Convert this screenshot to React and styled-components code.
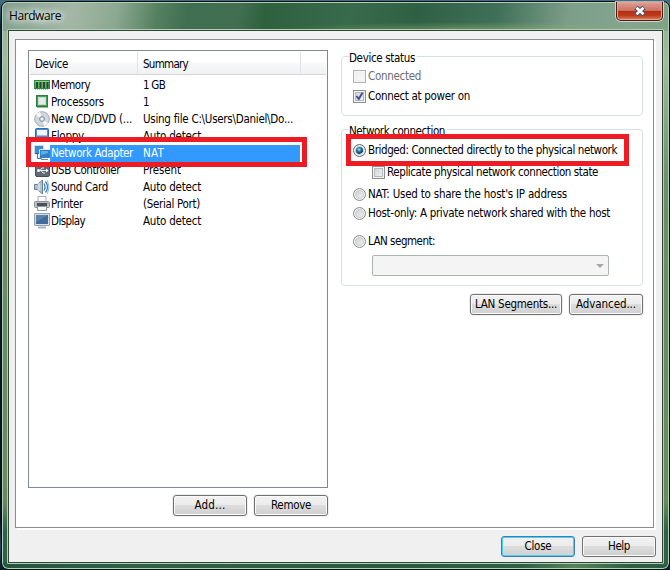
import React, { useLayoutEffect, useRef, useState } from 'react';
import styled, { createGlobalStyle, css } from 'styled-components';

const devices = [
    { icon: 'memory', name: 'Memory', nameWidth: 39, summary: '1 GB', summaryWidth: 22 },
    { icon: 'cpu', name: 'Processors', nameWidth: 53, summary: '1', summaryWidth: 7 },
    { icon: 'disc', name: 'New CD/DVD (...', nameWidth: 81, summary: 'Using file C:\\Users\\Daniel\\Do...', summaryWidth: 150 },
    { icon: 'floppy', name: 'Floppy', nameWidth: 33, summary: 'Auto detect', summaryWidth: 58 },
    { icon: 'network', name: 'Network Adapter', nameWidth: 82, summary: 'NAT', summaryWidth: 21, selected: true },
    { icon: 'usb', name: 'USB Controller', nameWidth: 69, summary: 'Present', summaryWidth: 38 },
    { icon: 'sound', name: 'Sound Card', nameWidth: 57, summary: 'Auto detect', summaryWidth: 58 },
    { icon: 'printer', name: 'Printer', nameWidth: 32, summary: '(Serial Port)', summaryWidth: 57 },
    { icon: 'display', name: 'Display', nameWidth: 34, summary: 'Auto detect', summaryWidth: 58 },
];

// text that is tracked to fill the given width
const Label = ({ width, children }) => {
    const ref = useRef(null)
    const [spacing, setSpacing] = useState(0)

    useLayoutEffect(() => {
        const natural = ref.current.getBoundingClientRect().width
        setSpacing((width - natural) / children.length)
    }, [])

    return <Text ref={ref} style={{ letterSpacing: `${spacing}px` }}>{children}</Text>
}

const icons = {
    memory: (
        <>
            <rect x="0.5" y="3.5" width="15" height="8" fill="#5cb45f" stroke="#2c8a3c" />
            <path d="M2 5h2v6H2zM5.5 5h2v6h-2zM9 5h2v6H9zM12.5 5h2v6h-2z" fill="#2b4a33" />
            <path d="M1 12.5h14" stroke="#b9b27a" strokeDasharray="1 1" />
            <path d="M1 4.5h14" stroke="#8fd08f" />
        </>
    ),
    cpu: (
        <>
            <rect x="2.5" y="1.5" width="11" height="11" fill="#3fa458" stroke="#2a7f40" />
            <rect x="4.5" y="3.5" width="7" height="7" fill="#e7eaea" stroke="#c9d9cd" />
            <path d="M3 13.5h11" stroke="#9bb8a2" />
        </>
    ),
    disc: (
        <>
            <circle cx="8" cy="8" r="7.3" fill="#d3d6da" stroke="#a3a8af" />
            <path d="M8 8L2 4a7 7 0 0 1 4-3zM8 8l6 4a7 7 0 0 1-4 3z" fill="#fafafa" />
            <circle cx="8" cy="8" r="2.5" fill="#c5d0dc" stroke="#8d99a8" />
            <circle cx="8" cy="8" r="1" fill="#fff" />
        </>
    ),
    floppy: (
        <>
            <rect x="1.5" y="0.5" width="13" height="13" rx="1" fill="#4a92d8" stroke="#2f6bb0" />
            <path d="M3 2h10v5H3z" fill="#f1f6fc" />
            <path d="M3 7.5h10" stroke="#9dbde0" />
            <path d="M4 10h8v4H4z" fill="#d9e2ec" />
            <path d="M5 11h2v3H5z" fill="#2c5f99" />
        </>
    ),
    network: (
        <>
            <path d="M3.500 9v4.500h4" fill="none" stroke="#3a78b5" />
            <rect x="0.500" y="0.500" width="9" height="8" rx="0.5" fill="#3f8bd0" stroke="#c4def5" />
            <path d="M1 8.500h5" stroke="#2a5f99" />
            <rect x="5.500" y="4.500" width="10" height="8" rx="0.5" fill="#2f80cb" stroke="#d5e8f8" />
            <path d="M7 6h7v2L7 10z" fill="#62abe6" />
            <path d="M6 12.500h9.500V5" fill="none" stroke="#4a7fb2" />
            <path d="M7 14.500h7" stroke="#5b8fc0" />
        </>
    ),
    usb: (
        <>
            <rect x="1.500" y="1.500" width="14" height="13" rx="1.500" fill="#606a76" stroke="#46505b" />
            <path d="M4 8.500h9M6 8.500l2-2.500h2M7 8.500l2 2.500h2" stroke="#e8edf2" fill="none" />
            <circle cx="4.500" cy="8.500" r="1.500" fill="#fff" />
            <path d="M12 6.500l2.500 2-2.500 2z" fill="#fff" />
        </>
    ),
    sound: (
        <>
            <path d="M0.500 5.500h3l5-4.500v14l-5-4.500h-3z" fill="#b4c0cb" stroke="#6d7f8e" />
            <path d="M5 4v8" stroke="#eef3f7" />
            <path d="M10 4.500q2 3.500 0 7M11.500 2.500q4 5.500 0 11" stroke="#367eb8" strokeWidth="1.300" fill="none" />
            <path d="M13.500 1.500q3 6.500 0 13" stroke="#87bade" fill="none" />
        </>
    ),
    printer: (
        <>
            <path d="M4 0.500h8v5H4z" fill="#fff" stroke="#a9adb3" />
            <rect x="0.500" y="5.500" width="15" height="6" rx="1" fill="#b9bcc2" stroke="#8d9096" />
            <path d="M3 7h10v3H3z" fill="#4c5157" />
            <path d="M3.500 10.500h9v4h-9z" fill="#f7fafc" stroke="#92989f" />
            <path d="M13 7.500h1.500" stroke="#5cc55f" />
        </>
    ),
    display: (
        <>
            <rect x="0.500" y="0.500" width="15" height="12" rx="0.500" fill="#d5dce4" stroke="#97a1ac" />
            <path d="M2 2h12v9H2z" fill="#426c9a" />
            <path d="M2 2h12L2 9z" fill="#5b82ab" />
            <path d="M4 14.500h8" stroke="#a9b1ba" strokeWidth="2" />
        </>
    ),
};

const DeviceList = () => (
    <ListBox>
        <HeaderRow>
            <HeaderCell $width={108}><Label width={33}>Device</Label></HeaderCell>
            <HeaderCell $width={163}><Label width={45}>Summary</Label></HeaderCell>
        </HeaderRow>
        <Rows>
            {devices.map(device =>
                <Row key={device.name}>
                    <DeviceIcon viewBox="0 0 16 16">{icons[device.icon]}</DeviceIcon>
                    <RowContent $selected={device.selected}>
                        <NameCell><Label width={device.nameWidth}>{device.name}</Label></NameCell>
                        <Label width={device.summaryWidth}>{device.summary}</Label>
                    </RowContent>
                </Row>
            )}
        </Rows>
    </ListBox>
)

const CheckOption = ({ label, width, checked, disabled, ...rest }) => (
    <Option $disabled={disabled} {...rest}>
        <CheckBox $disabled={disabled}>
            {checked &&
                <Tick viewBox="0 0 9 9">
                    <path d="M1.500 4l2.200 3L7.500 0.800" fill="none" stroke="#3c5091" strokeWidth="1.900" />
                </Tick>}
        </CheckBox>
        <Label width={width}>{label}</Label>
    </Option>
)

const RadioOption = ({ label, width, checked, ...rest }) => (
    <Option {...rest}>
        <Radio $checked={checked} />
        <Label width={width}>{label}</Label>
    </Option>
)

const App = () => (
    <>
        <GlobalStyle />
        <Desktop>
            <Window>
                <TitleBar>
                    <Title><Label width={52}>Hardware</Label></Title>
                    <CloseBox>
                        <svg width="14" height="12" viewBox="0 0 14 12">
                            <path d="M3 2.500l8 7M11 2.500l-8 7" stroke="#46506a" strokeWidth="4.800" />
                            <path d="M3.500 2.800l7 6.400M10.500 2.800l-7 6.400" stroke="#fff" strokeWidth="2.800" />
                        </svg>
                    </CloseBox>
                </TitleBar>
                <Client>
                    <Panel>
                        <LeftColumn>
                            <DeviceList />
                            <Buttons>
                                <Button $width={74}><Label width={31}>Add...</Label></Button>
                                <Button $width={74}><Label width={40}>Remove</Label></Button>
                            </Buttons>
                        </LeftColumn>
                        <RightColumn>
                            <Group $height={60}>
                                <Legend><Label width={66}>Device status</Label></Legend>
                                <CheckOption label="Connected" width={53} disabled $top={3} />
                                <CheckOption label="Connect at power on" width={102} checked $top={3} />
                            </Group>
                            <Group $height={157} $top={13}>
                                <Legend><Label width={96}>Network connection</Label></Legend>
                                <RadioOption label="Bridged: Connected directly to the physical network" width={249} checked $top={4} />
                                <CheckOption label="Replicate physical network connection state" width={211} $top={5} $indent={19} />
                                <RadioOption label="NAT: Used to share the host's IP address" width={199} $top={5} />
                                <RadioOption label="Host-only: A private network shared with the host" width={242} $top={2} />
                                <RadioOption label="LAN segment:" width={67} $top={11} />
                                <Select><Arrow /></Select>
                            </Group>
                            <Buttons $top={8}>
                                <Button $width={92}><Label width={82}>LAN Segments...</Label></Button>
                                <Button $width={74}><Label width={60}>Advanced...</Label></Button>
                            </Buttons>
                        </RightColumn>
                    </Panel>
                    <Footer>
                        <Button $width={74} $focused><Label width={27}>Close</Label></Button>
                        <Button $width={74}><Label width={22}>Help</Label></Button>
                    </Footer>
                </Client>
            </Window>
            <Highlight $left={26} $top={137} $width={281} $height={30} />
            <Highlight $left={346} $top={134} $width={283} $height={32} />
        </Desktop>
    </>
)

export default App

const GlobalStyle = createGlobalStyle`
  * {
    box-sizing: border-box;
  }
  body {
    margin: 0;
    overflow: hidden;
  }
`
const Desktop = styled.div`
  position: relative;
  width: 670px;
  height: 570px;
  padding: 1px 0 0 1px;
  background: linear-gradient(#426b86 0, #426b86 2px, #0b2638 24px, #07131f 520px, #23445f 546px, #0b1a26 570px);
  color: #000;
  font: 11.5px "DejaVu Sans Condensed", "DejaVu Sans", sans-serif;
`
const Window = styled.div`
  width: 669px;
  height: 569px;
  padding: 0 5px 5px;
  border: 1px solid #07120c;
  border-radius: 7px;
  box-shadow: inset 0 0 0 1px #b6cdbb;
  background:
    radial-gradient(ellipse 210px 9px at 480px 29px, rgba(150, 180, 110, 0.6), transparent) 0 0 / 100% 29px no-repeat,
    linear-gradient(100deg, #819f8c 0, #a4b7a6 70px, #8ba890 115px, #55805f 155px, #3f6f50 185px, #426f51 235px, #2f613f 260px, #386b4b 345px, #2f6044 410px, #40705a 490px, #7c9d88 560px, #84a590 620px, #80a184 100%) 0 0 / 100% 29px no-repeat,
    linear-gradient(to right, #245640 0, #2d6148 20%, #285a3f 60%, #2d6046 78%, #55845b 86%, #2b5e45 94%) 0 100% / 100% 7px no-repeat,
    linear-gradient(#91ac93 0, #a2bb9b 60px, #6b9067 180px, #668b5c 500px, #2d6148 530px);
`
const TitleBar = styled.div`
  display: flex;
  justify-content: space-between;
  height: 27px;
  padding-left: 2px;
`
const Title = styled.div`
  height: 27px;
  font: 12px/28px "Open Sans", "Noto Sans", sans-serif;
  text-shadow: 0 0 7px #fff, 0 0 9px #fff, 0 0 12px rgba(255, 255, 255, 0.7);
`
const CloseBox = styled.div`
  display: flex;
  align-items: center;
  justify-content: center;
  width: 47px;
  height: 19px;
  margin-right: 1px;
  padding-bottom: 1px;
  border: 1px solid #4b1b18;
  border-top: 0;
  border-radius: 0 0 5px 5px;
  box-shadow: inset 0 0 0 1px #e4a698, 0 0 0 1px rgba(225, 232, 220, 0.75);
  background: linear-gradient(#dda195 0, #cd7262 47%, #b32d13 50%, #bd3c1c 75%, #dd835b 100%);
`
const Client = styled.div`
  width: 657px;
  height: 535px;
  padding: 8px 7px 0 6px;
  border: 1px solid #b3cbb0;
  border-radius: 1px;
  box-shadow: inset 0 0 0 1px #2f4736;
  background: #f0f0f0;
`
const Panel = styled.div`
  display: flex;
  width: 639px;
  height: 489px;
  margin-top: 1px;
  margin-left: 1px;
  border: 1px solid #898c95;
  box-shadow: 2px 2px 0 #fff;
  background: #fff;
`
const LeftColumn = styled.div`
  width: 312px;
  padding: 10px 0 0 12px;
`
const RightColumn = styled.div`
  width: 315px;
  padding: 16px 0 0 13px;
`
const Text = styled.span`
  display: inline-block;
  white-space: pre;
`
const ListBox = styled.div`
  width: 300px;
  height: 438px;
  padding: 1px;
  border: 1px solid #828790;
`
const HeaderRow = styled.div`
  display: flex;
  height: 23px;
  border-bottom: 1px solid #d5d5d5;
  background: linear-gradient(#fff 45%, #f7f8fa 50%, #f1f2f4 100%);
`
const HeaderCell = styled.div`
  width: ${({ $width }) => $width}px;
  padding-left: 5px;
  border-right: 1px solid #e2e3e6;
  line-height: 24px;
`
const Rows = styled.div`
  padding: 2px 0 0 4px;
`
const Row = styled.div`
  display: flex;
  height: 17px;
`
const DeviceIcon = styled.svg`
  width: 16px;
  height: 16px;
`
const RowContent = styled.div`
  display: flex;
  width: 250px;
  padding-left: 1px;
  line-height: 17px;
  ${({ $selected }) => $selected && css`
    background: #3399ff;
    color: #fff;
  `}
`
const NameCell = styled.div`
  width: 92px;
`
const Buttons = styled.div`
  display: flex;
  justify-content: flex-end;
  gap: 7px;
  width: ${({ $top }) => $top ? '302px' : 'auto'};
  margin-top: ${({ $top = 7 }) => $top}px;
`
const Button = styled.div`
  display: flex;
  align-items: center;
  justify-content: center;
  width: ${({ $width }) => $width}px;
  height: 21px;
  border: 1px solid ${({ $focused }) => $focused ? '#3c7fb1' : '#707070'};
  border-radius: 3px;
  box-shadow: inset 0 0 0 1px ${({ $focused }) => $focused ? '#48d1f7' : '#fbfbfb'}, 0 0 0 1px #f0f0f0;
  background: linear-gradient(#f2f2f2 0, #ebebeb 49%, #dddddd 50%, #cfcfcf 100%);
  line-height: 17px;
`
const Group = styled.div`
  display: flex;
  flex-direction: column;
  width: 302px;
  height: ${({ $height }) => $height}px;
  margin-top: ${({ $top = 0 }) => $top}px;
  padding-left: 7px;
  border: 1px solid #d5dfe5;
  border-radius: 4px;
`
const Legend = styled.div`
  align-self: flex-start;
  height: 14px;
  margin-top: -6px;
  padding-right: 2px;
  background: #fff;
  line-height: 14px;
`
const Option = styled.div`
  display: flex;
  align-items: center;
  gap: 2px;
  height: 17px;
  margin-top: ${({ $top }) => $top}px;
  margin-left: ${({ $indent = 0 }) => $indent + 4}px;
  color: ${({ $disabled }) => $disabled ? '#6d6d6d' : '#000'};
  line-height: 17px;
`
const CheckBox = styled.div`
  display: flex;
  align-items: center;
  justify-content: center;
  flex: none;
  width: 13px;
  height: 13px;
  border: 1px solid ${({ $disabled }) => $disabled ? '#b1b1b1' : '#8e8f8f'};
  box-shadow: inset 0 0 0 1px #f4f4f4, inset 0 0 0 2px ${({ $disabled }) => $disabled ? '#f0f0f0' : '#b5babf'};
  background: linear-gradient(135deg, ${({ $disabled }) => $disabled ? '#f0f0f0, #f8f8f8' : '#cbcfd5, #f6f6f6'});
`
const Tick = styled.svg`
  width: 9px;
  height: 9px;
`
const Radio = styled.div`
  flex: none;
  width: 13px;
  height: 13px;
  border: 1px solid ${({ $checked }) => $checked ? '#5b6f7b' : '#8e8f8f'};
  border-radius: 50%;
  box-shadow: inset 0 0 0 1px #f4f4f4, inset 0 0 0 2px #cdd0d3;
  background: ${({ $checked }) => $checked
        ? 'radial-gradient(circle at 5px 4.5px, #a5dff5 0, #2c83ac 2px, #12354d 4px, #c6d5dd 4.700px)'
        : 'linear-gradient(135deg, #c7cbd0, #f5f5f5)'};
`
const Select = styled.div`
  display: flex;
  align-items: center;
  justify-content: flex-end;
  width: 237px;
  height: 21px;
  margin: 5px 0 0 23px;
  padding-right: 4px;
  border: 1px solid #adb2b5;
  border-radius: 2px;
  background: #f4f4f4;
`
const Arrow = styled.div`
  border: 4px solid transparent;
  border-top-color: #a5a5a5;
  border-bottom: 0;
`
const Footer = styled.div`
  display: flex;
  justify-content: flex-end;
  gap: 7px;
  margin-top: 8px;
`
const Highlight = styled.div`
  position: absolute;
  left: ${({ $left }) => $left}px;
  top: ${({ $top }) => $top}px;
  width: ${({ $width }) => $width}px;
  height: ${({ $height }) => $height}px;
  border: 5px solid #ed1c24;
`
